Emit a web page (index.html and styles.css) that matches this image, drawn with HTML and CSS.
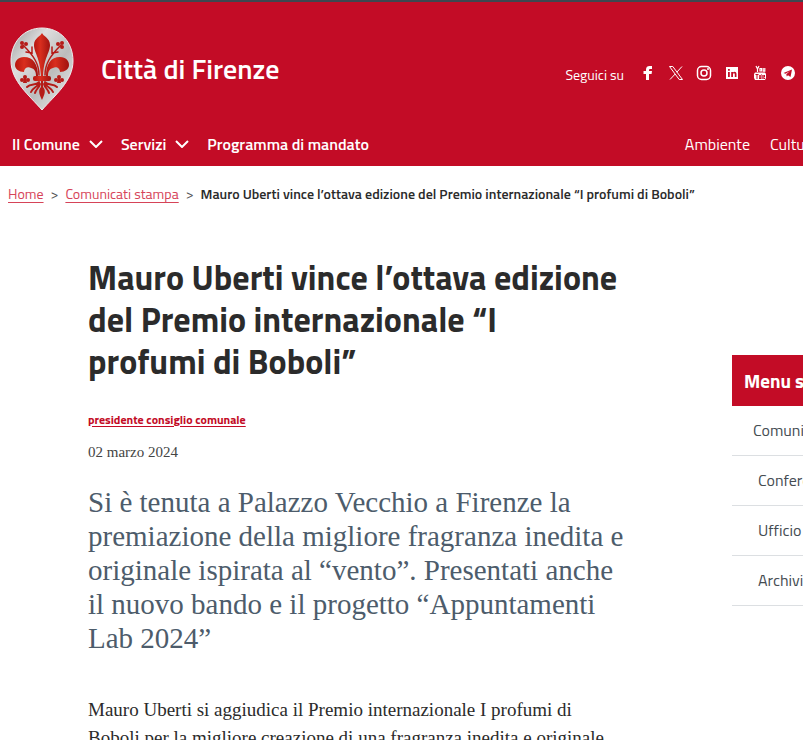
FILE: index.html
```html
<!DOCTYPE html>
<html lang="it">

<head>
    <meta charset="UTF-8">
    <meta name="viewport" content="width=device-width, initial-scale=1.0">
    <title>Mauro Uberti vince l’ottava edizione | Città di Firenze</title>
    <link rel="stylesheet" href="styles.css">
</head>

<body>
    <header class="header">
        <div class="brand-row">
            <a class="brand" href="#">
                <svg class="logo" viewBox="0 0 64 86" aria-hidden="true">
                    <defs>
                        <linearGradient id="silver" x1="0" y1="0" x2="1" y2="1">
                            <stop offset="0" stop-color="#999" />
                            <stop offset=".3" stop-color="#dedede" />
                            <stop offset=".6" stop-color="#bcbcbc" />
                            <stop offset="1" stop-color="#f4f4f4" />
                        </linearGradient>
                        <linearGradient id="lily" x1="0" y1="0" x2="1" y2="0">
                            <stop offset="0" stop-color="#b5160f" />
                            <stop offset=".4" stop-color="#d92e1e" />
                            <stop offset="1" stop-color="#a01310" />
                        </linearGradient>
                    </defs>
                    <path fill="url(#silver)" stroke="#eee" d="M32 1C14 1 1 15 1 34c0 20 18 34 31 49 13-15 31-29 31-49C63 15 50 1 32 1z" />
                    <g fill="url(#lily)">
                        <path d="M32 6c-1 3-8 5-8 12 0 8 6 12 7 31h2c1-19 7-23 7-31 0-7-7-9-8-12z" />
                        <path d="M28 49c0-12-5-19-14-19-6 0-9 4-9 8s4 7 9 7c0-4 4-6 7-4 4 1 5 4 5 8z" />
                        <path d="M36 49c0-12 5-19 14-19 6 0 9 4 9 8s-4 7-9 7c0-4-4-6-7-4-4 1-5 4-5 8z" />
                        <rect x="23" y="49" width="18" height="5" rx="2" />
                    </g>
                    <g fill="#b51b17">
                        <circle cx="15" cy="50" r="2" /><circle cx="12" cy="53" r="2" /><circle cx="18" cy="53" r="2" /><path d="M14 50h2l1 6h-4z" />
                        <circle cx="49" cy="50" r="2" /><circle cx="46" cy="53" r="2" /><circle cx="52" cy="53" r="2" /><path d="M48 50h2l1 6h-4z" />
                        <circle cx="12" cy="20" r="2" /><circle cx="16" cy="17" r="2" /><circle cx="12" cy="16" r="2" />
                        <circle cx="52" cy="20" r="2" /><circle cx="48" cy="17" r="2" /><circle cx="52" cy="16" r="2" />
                        <path d="M31 54v6c-3 3-2 7 1 13 3-6 4-10 1-13v-6z" />
                    </g>
                    <g fill="none" stroke="#b51b17" stroke-linecap="round">
                        <path stroke-width="1.500" d="M29 48c0-11-5-19-16-30M35 48c0-11 5-19 16-30M16 25l6 1V20M48 25l-6 1V20" />
                        <path stroke-width="2" d="M29 55c-3 4-8 1-12 5M29 56c-2 5-6 4-8 9M30 57c-1 4-4 5-5 9M35 55c3 4 8 1 12 5M35 56c2 5 6 4 8 9M34 57c1 4 4 5 5 9" />
                    </g>
                </svg>
                <span class="brand-name">Città di Firenze</span>
            </a>
            <div class="social">
                <span class="social-label">Seguici su</span>
                <a href="#" aria-label="Facebook">
                    <svg viewBox="0 0 16 16"><path d="M6 15V9H3.500V6H6V4.500C6 2 7.500 1 9.500 1H12v3h-1.500C9.500 4 9 4.300 9 5v1h3l-.4 3H9v6z" /></svg>
                </a>
                <a href="#" aria-label="X">
                    <svg viewBox="0 0 16 16"><path fill="none" stroke="#fff" d="M1.500 1.500h3.300l9.700 13h-3.300zM14 1.500L8.800 7.200M7.200 9L2 14.500" /></svg>
                </a>
                <a href="#" aria-label="Instagram">
                    <svg viewBox="0 0 16 16"><g fill="none" stroke="#fff" stroke-width="1.500"><rect x="1.500" y="1.500" width="13" height="13" rx="4" /><circle cx="8" cy="8" r="3" /></g><circle cx="12" cy="4" r="1" /></svg>
                </a>
                <a href="#" aria-label="LinkedIn">
                    <svg viewBox="0 0 16 16"><path fill-rule="evenodd" d="M2 2h12v12H2zM4 7v5h1.800V7zM4 4v1.700h1.800V4zM7.200 7v5H9V9.500c0-1.600 1.800-1.600 1.800 0V12h1.700V9.200C12.500 6.500 10 6.200 9 7.600V7z" /></svg>
                </a>
                <a href="#" aria-label="YouTube">
                    <svg viewBox="0 0 16 16"><path fill="none" stroke="#fff" stroke-width="1.200" d="M4 1l1.500 3L7 1M5.500 4v3M8 3.500h1.500V6H8zM11.200 3v3.200h1.600V3" /><path fill-rule="evenodd" d="M3 7.500h10l1 1.500v4l-1 2H3l-1-2V9zM3.500 9v1h1v4h1v-4h1V9zM7 10v4h2v-4H8.200v3h-.4v-3zM9.500 9v5h1.200v-4H10V9zM11.300 10v4H13v-1h-.8v-.7h.8V10z" /></svg>
                </a>
                <a href="#" aria-label="Telegram">
                    <svg viewBox="0 0 16 16"><path fill-rule="evenodd" d="M8 1a7 7 0 1 0 0 14A7 7 0 0 0 8 1zM12 4.500l-1.500 7.500-2.500-1.800-1.200 1.300-.5-2.200L10 6 5.500 8.800 3.500 8z" /></svg>
                </a>
            </div>
        </div>
        <nav class="nav" aria-label="Menu principale">
            <ul class="nav-main">
                <li><a href="#">Il Comune <svg class="chevron" viewBox="0 0 14 8"><path d="M1 1l6 6 6-6" /></svg></a></li>
                <li><a href="#">Servizi <svg class="chevron" viewBox="0 0 14 8"><path d="M1 1l6 6 6-6" /></svg></a></li>
                <li><a href="#">Programma di mandato</a></li>
            </ul>
            <ul class="nav-topics">
                <li><a href="#">Ambiente</a></li>
                <li class="cut"><a href="#">Cultura</a></li>
            </ul>
        </nav>
    </header>

    <nav aria-label="Percorso">
        <ol class="breadcrumb">
            <li><a href="#">Home</a></li>
            <li><a href="#">Comunicati stampa</a></li>
            <li class="current">Mauro Uberti vince l’ottava edizione del Premio internazionale “I profumi di Boboli”</li>
        </ol>
    </nav>

    <div class="page">
        <main class="article">
            <h1>Mauro Uberti vince l’ottava edizione del Premio internazionale “I profumi di Boboli”</h1>
            <a class="category" href="#">presidente consiglio comunale</a>
            <p class="date">02 marzo 2024</p>
            <p class="lead">Si è tenuta a Palazzo Vecchio a Firenze la premiazione della migliore fragranza inedita e originale ispirata al “vento”. Presentati anche il nuovo bando e il progetto “Appuntamenti Lab 2024”</p>
            <p class="text">Mauro Uberti si aggiudica il Premio internazionale I profumi di Boboli per la migliore creazione di una fragranza inedita e originale</p>
        </main>
        <aside class="side-menu">
            <h2>Menu sezione</h2>
            <ul>
                <li class="parent"><a href="#">Comunicati</a></li>
                <li><a href="#">Conferenze</a></li>
                <li><a href="#">Ufficio</a></li>
                <li><a href="#">Archivio</a></li>
            </ul>
        </aside>
    </div>
</body>

</html>
```
FILE: styles.css
```css
html,
body {
    margin: 0;
}

body {
    height: 100vh;
    overflow: hidden;
    font-family: "Titillium Web", "Open Sans", "Noto Sans", sans-serif;
    color: #2b2b2b;
    background-color: #fff;
}

ul,
ol {
    list-style: none;
    margin: 0;
    padding: 0;
}

.header {
    border-top: 2px solid #3d4750;
    background-color: #c30c26;
    color: #fff;
}

.header a {
    color: #fff;
    text-decoration: none;
}

.header svg {
    display: block;
    fill: #fff;
}

.brand-row {
    display: flex;
    justify-content: space-between;
    align-items: center;
    height: 120px;
    padding: 0 7px 0 10px;
}

.brand {
    display: flex;
    align-items: center;
    gap: 27px;
    padding-top: 16px;
}

.logo {
    width: 64px;
    height: 86px;
}

.brand-name {
    padding-bottom: 4px;
    font-size: 28px;
    font-weight: 600;
}

.social {
    display: flex;
    align-items: center;
    gap: 12px;
    padding-top: 22px;
}

.social-label {
    margin-right: 4px;
    padding-top: 3px;
    font-size: 14px;
}

.social svg {
    width: 16px;
    height: 16px;
}

.nav {
    display: flex;
    justify-content: space-between;
    align-items: center;
    height: 44px;
    padding-left: 12px;
    font-size: 16px;
    white-space: nowrap;
}

.nav-main,
.nav-topics {
    display: flex;
    gap: 20px;
}

.nav-main {
    gap: 18px;
    font-weight: 600;
}

.nav-main a {
    display: flex;
    align-items: center;
    gap: 9px;
}

.nav-topics .cut {
    width: 33px;
    overflow: hidden;
}

.header .chevron {
    width: 14px;
    height: 8px;
    fill: none;
    stroke: #fff;
    stroke-width: 2;
}

.breadcrumb {
    display: flex;
    padding: 18px 8px;
    font-size: 14px;
    line-height: 20px;
    white-space: nowrap;
}

.breadcrumb a {
    color: #d64358;
    text-underline-offset: 3px;
}

.breadcrumb li + li::before {
    content: ">";
    margin: 0 7px;
    font-weight: 400;
    color: #555;
}

.breadcrumb .current {
    font-weight: 600;
}

.page {
    display: flex;
    justify-content: space-between;
}

.article {
    flex: 1;
    max-width: 540px;
    padding: 34px 0 0 88px;
}

.article h1 {
    max-width: 531px;
    margin: 0 0 28px;
    font-size: 34px;
    line-height: 42px;
    font-weight: 700;
}

.category {
    display: block;
    font-size: 12px;
    line-height: 20px;
    font-weight: 700;
    color: #c30c26;
    text-underline-offset: 2px;
}

.date,
.lead,
.text {
    font-family: "Liberation Serif", "Times New Roman", serif;
}

.date {
    margin: 12px 0 23px;
    font-size: 15px;
    line-height: 20px;
    color: #444;
}

.lead {
    margin: 0 0 41px;
    font-size: 29px;
    line-height: 34px;
    color: #4d5c6b;
}

.text {
    margin: 0;
    font-size: 19px;
    line-height: 28px;
}

.side-menu {
    width: 71px;
    margin-top: 133px;
    overflow: hidden;
    white-space: nowrap;
}

.side-menu h2 {
    margin: 0;
    padding-left: 12px;
    font-size: 19px;
    line-height: 51px;
    font-weight: 700;
    color: #fff;
    background-color: #c30c26;
}

.side-menu li {
    padding-left: 26px;
    border-bottom: 1px solid #dcdfe2;
    font-size: 16px;
    line-height: 49px;
}

.side-menu .parent {
    padding-left: 21px;
}

.side-menu a {
    color: #454c52;
    text-decoration: none;
}
```
